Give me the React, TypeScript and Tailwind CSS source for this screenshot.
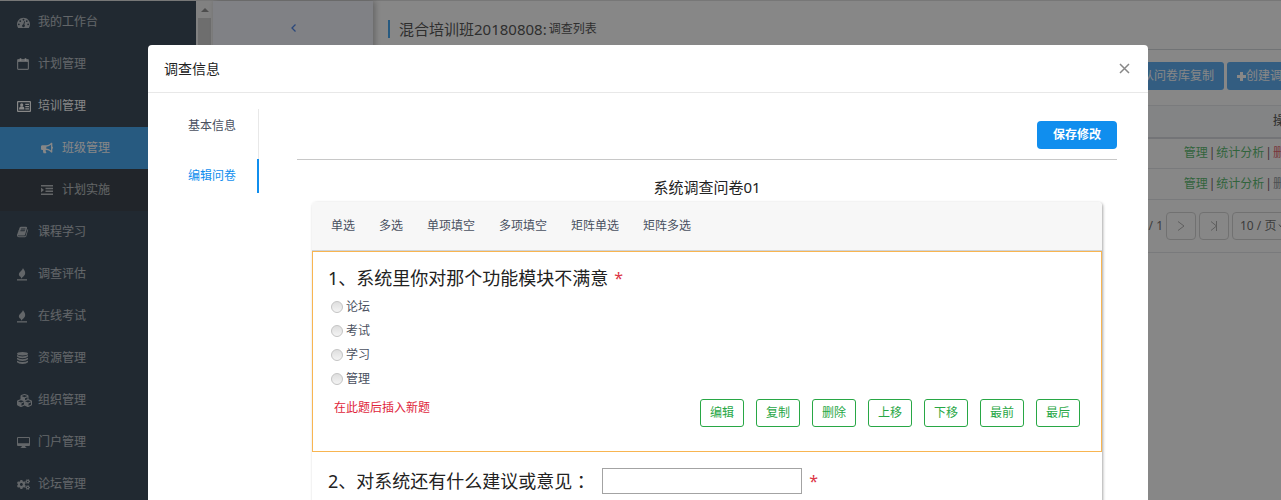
import type { ReactNode } from 'react';
import { FaBullhorn, FaCogs, FaCubes } from 'react-icons/fa';

function DashboardIcon() {
  return (
    <svg viewBox="0 0 1792 1792" width="13" height="13" fill="currentColor" aria-hidden="true">
      <path d="M384 1152q0-53-37.500-90.500t-90.500-37.500-90.500 37.500-37.500 90.500 37.500 90.500 90.500 37.500 90.500-37.500 37.500-90.500zm192-448q0-53-37.500-90.500t-90.500-37.500-90.500 37.500-37.500 90.500 37.500 90.500 90.500 37.500 90.500-37.500 37.500-90.500zm428 481l101-382q6-26-7.500-48.500t-38.500-29.500-48 6.500-30 39.500l-101 382q-60 5-107 43.500t-63 98.500q-20 77 20 146t117 89 146-20 89-117q16-60-6-117t-72-91zm660-33q0-53-37.500-90.500t-90.500-37.500-90.500 37.500-37.500 90.500 37.500 90.500 90.500 37.500 90.500-37.500 37.500-90.500zm-640-640q0-53-37.500-90.500t-90.500-37.500-90.500 37.500-37.500 90.500 37.500 90.500 90.500 37.500 90.500-37.500 37.500-90.500zm448 192q0-53-37.500-90.500t-90.500-37.500-90.500 37.500-37.500 90.500 37.500 90.500 90.500 37.500 90.500-37.500 37.500-90.500zm320 448q0 261-141 483-19 29-54 29h-1402q-35 0-54-29-141-221-141-483 0-182 71-348t191-286 286-191 348-71 348 71 286 191 191 286 71 348z" />
    </svg>
  );
}

function CalendarIcon() {
  return (
    <svg viewBox="0 0 12 12" width="12" height="12" fill="none" stroke="currentColor" aria-hidden="true">
      <rect x=".6" y="1.600" width="10.800" height="9.800" rx=".8" strokeWidth="1.200" />
      <path d="M1 3h10" strokeWidth="2" />
      <path d="M3.500 0v3M8.500 0v3" strokeWidth="1.600" />
    </svg>
  );
}

function IdCardIcon() {
  return (
    <svg viewBox="0 0 14 11" width="14" height="11" fill="currentColor" aria-hidden="true">
      <path d="M1 0h12a1 1 0 011 1v9a1 1 0 01-1 1H1a1 1 0 01-1-1V1a1 1 0 011-1zm.2 1.200v8.600h11.600V1.200z" fillRule="evenodd" />
      <circle cx="4.700" cy="3.900" r="1.600" />
      <path d="M2 8.500c0-2 .9-3.200 2.700-3.200s2.700 1.200 2.700 3.200z" />
      <path d="M8.300 2.800h3.700v1.200H8.300zM8.300 5h3.700v1.200H8.300zM8.300 7.200h3.700v1.200H8.300z" />
    </svg>
  );
}

function IndentIcon() {
  return (
    <svg viewBox="0 0 12 10" width="12" height="10" fill="currentColor" aria-hidden="true">
      <path d="M0 0h12v1.500H0zM4.500 2.800H12v1.500H4.500zM4.500 5.600H12v1.500H4.500zM0 8.500h12V10H0zM0 2.600l3 2.400-3 2.400z" />
    </svg>
  );
}

function BookIcon() {
  return (
    <svg viewBox="0 0 1792 1792" width="12" height="12" fill="currentColor" aria-hidden="true">
      <path d="M1639 478q40 57 18 129l-275 906q-19 64-76.500 107.500t-122.500 43.500h-923q-77 0-148.500-53.500t-99.500-131.500q-24-67-2-127 0-4 3-27t4-37q1-8-3-21.500t-3-19.500q2-11 8-21t16.500-23.500 16.500-23.500q23-38 45-91.500t30-91.500q3-10 .5-30t-.5-28q3-11 17-28t17-23q21-36 42-92t25-90q1-9-2.500-32t.5-28q4-13 22-30.500t22-22.500q19-26 42.500-84.500t27.500-96.500q1-8-3-25.500t-2-26.500q2-8 9-18t18-23 17-21q8-12 16.500-30.500t15-35 16-36 19.500-32 26.500-23.500 36-11.500 47.500 5.500l-1 3q38-9 51-9h761q74 0 114 56t18 130l-274 906q-36 119-71.500 153.500t-128.500 34.500h-869q-27 0-38 15-11 16-1 43 24 70 144 70h923q29 0 56-15.500t35-41.500l300-987q7-22 5-57 38 15 59 43zm-1064 2q-4 13 2 22.500t20 9.500h608q13 0 25.500-9.500t16.500-22.500l21-64q4-13-2-22.500t-20-9.500h-608q-13 0-25.500 9.500t-16.500 22.500zm-83 256q-4 13 2 22.500t20 9.500h608q13 0 25.500-9.500t16.500-22.500l21-64q4-13-2-22.500t-20-9.500h-608q-13 0-25.500 9.500t-16.500 22.500z" />
    </svg>
  );
}

function QuillIcon() {
  return (
    <svg viewBox="0 0 10 13" width="10" height="13" fill="currentColor" aria-hidden="true">
      <path d="M6 0C6.200 1.300 8.300 2.600 8.200 5c-.1 2.200-1.500 3.200-2.700 4.200L4 10.800 3.900 9C2 8.200 1.400 6.600 2.200 5 3 3.500 5.600 2.400 6 0z" />
      <path d="M0 11.200h10v1.300H0z" />
    </svg>
  );
}

function DatabaseIcon() {
  return (
    <svg viewBox="0 0 11 12" width="11" height="12" fill="currentColor" aria-hidden="true">
      <ellipse cx="5.500" cy="1.700" rx="5.500" ry="1.700" />
      <path d="M0 3q2 1.400 5.500 1.400T11 3v1.500Q9.500 6.200 5.500 6.200T0 4.500z" />
      <path d="M0 5.800q2 1.400 5.500 1.400T11 5.800v1.500Q9.500 9 5.500 9T0 7.300z" />
      <path d="M0 8.700q2 1.400 5.500 1.400T11 8.700v1.500Q9.500 12 5.500 12T0 10.200z" />
    </svg>
  );
}

function DesktopIcon() {
  return (
    <svg viewBox="0 0 13 11" width="13" height="11" fill="currentColor" aria-hidden="true">
      <path d="M1 0h11a1 1 0 011 1v7a1 1 0 01-1 1H8.200l.3 1.200h.8V11H3.700v-.8h.8L4.800 9H1a1 1 0 01-1-1V1a1 1 0 011-1zm0 1v5.200h11V1z" fillRule="evenodd" />
    </svg>
  );
}

type Entry = { label: string; icon: ReactNode; kind?: 'open' | 'sub' | 'active' };

const menu: Entry[] = [
  { label: '我的工作台', icon: <DashboardIcon /> },
  { label: '计划管理', icon: <CalendarIcon /> },
  { label: '培训管理', icon: <IdCardIcon />, kind: 'open' },
  { label: '班级管理', icon: <FaBullhorn size={12} />, kind: 'active' },
  { label: '计划实施', icon: <IndentIcon />, kind: 'sub' },
  { label: '课程学习', icon: <BookIcon /> },
  { label: '调查评估', icon: <QuillIcon /> },
  { label: '在线考试', icon: <QuillIcon /> },
  { label: '资源管理', icon: <DatabaseIcon /> },
  { label: '组织管理', icon: <FaCubes size={15} /> },
  { label: '门户管理', icon: <DesktopIcon /> },
  { label: '论坛管理', icon: <FaCogs size={13} /> },
];

const rowTone = {
  top: 'pl-[17px] text-white/65',
  open: 'pl-[17px] text-white',
  sub: 'pl-[41px] text-white/65 bg-[#000c17]',
  active: 'pl-[41px] text-white bg-[#108eee]',
};

function Sidebar() {
  return (
    <nav className="w-[196px] shrink-0 overflow-hidden bg-[#001529]">
      <ul>
        {menu.map((m) => (
          <li key={m.label}>
            <a href="#" className={`flex h-[42px] items-center ${rowTone[m.kind ?? 'top']}`}>
              <span className="flex w-[21px] shrink-0 items-center">{m.icon}</span>
              {m.label}
            </a>
          </li>
        ))}
      </ul>
    </nav>
  );
}

function ScrollTrack() {
  return (
    <div className="flex w-[17px] shrink-0 flex-col items-center bg-[#f1f1f1]">
      <div className="flex h-[17px] items-center">
        <svg viewBox="0 0 8 4" width="8" height="4" fill="#707070" aria-hidden="true">
          <path d="M4 0l4 4H0z" />
        </svg>
      </div>
      <div className="h-[300px] w-[13px] bg-[#c1c1c1]" />
    </div>
  );
}

function RowActions({ muted }: { muted?: boolean }) {
  return (
    <div className="flex justify-end gap-px whitespace-nowrap text-[#4a2030]">
      <a href="#" className="text-[#28a745]">管理</a>
      <span>|</span>
      <a href="#" className="text-[#28a745]">统计分析</a>
      <span>|</span>
      <a href="#" className={muted ? 'text-[#6c757d]' : 'text-[#dc3545]'}>删除</a>
    </div>
  );
}

const pagerButton = 'flex h-7 w-[30px] items-center justify-center rounded border border-[#c8c8c8] text-[#999]';

function SurveyList() {
  return (
    <main className="min-w-0 flex-1 overflow-hidden pl-[15px]">
      <div className="-mr-[23px]">
        <header className="flex h-[49px] items-center border-b border-[#c9ccd2] pb-[3px] pt-[10px]">
          <h1 className="flex h-[18px] items-center gap-[2px] border-l-2 border-[#108eee] pl-[9px] text-[15px] text-[#222]">
            混合培训班20180808:
            <small className="text-xs">调查列表</small>
          </h1>
        </header>
        <div className="flex justify-end gap-[3px] pt-3 text-white">
          <button type="button" className="h-7 rounded-[3px] bg-[#2d96f0] px-[10px]">从问卷库复制</button>
          <button type="button" className="flex h-7 items-center rounded-[3px] bg-[#2d96f0] px-[10px]">
            <svg viewBox="0 0 9 9" width="9" height="9" fill="currentColor" aria-hidden="true">
              <path d="M3 0h3v3h3v3H6v3H3V6H0V3h3z" />
            </svg>
            创建调查
          </button>
        </div>
        <table className="mt-[15px] w-full border-collapse">
          <thead>
            <tr className="h-8 border-t border-b-2 border-t-[#dee2e6] border-b-[#cdd0d6] bg-[#f6f8fb]">
              <th className="pr-[7px] text-right font-medium text-[#333]">操作</th>
            </tr>
          </thead>
          <tbody>
            <tr className="h-[31px] border-b border-[#dcdfe3]">
              <td className="pr-[7px]"><RowActions /></td>
            </tr>
            <tr className="h-[31px] border-b border-[#dcdfe3]">
              <td className="pr-[7px]"><RowActions muted /></td>
            </tr>
          </tbody>
        </table>
        <div className="flex h-[53px] items-center justify-end gap-[3px] border-b border-[#dcdfe3] text-[#444]">
          <span className="text-xs">/ 1</span>
          <button type="button" aria-label="下一页" className={pagerButton}>
            <svg viewBox="0 0 8 10" width="8" height="10" fill="none" stroke="currentColor" aria-hidden="true">
              <path d="M1 .5L7 5 1 9.500" />
            </svg>
          </button>
          <button type="button" aria-label="末页" className={pagerButton}>
            <svg viewBox="0 0 8 10" width="8" height="10" fill="none" stroke="currentColor" aria-hidden="true">
              <path d="M1 .5L6.500 5 1 9.500M6.500 0v10" />
            </svg>
          </button>
          <div className="flex h-7 w-[72px] items-center gap-px rounded border border-[#c8c8c8] pl-[7px]">
            <select aria-label="每页条数" className="appearance-none text-xs">
              <option>10 / 页</option>
            </select>
            <svg viewBox="0 0 8 5" width="8" height="5" fill="none" stroke="currentColor" aria-hidden="true">
              <path d="M1 .5L4 4l3-3.500" />
            </svg>
          </div>
        </div>
      </div>
    </main>
  );
}

const questionTypes = ['单选', '多选', '单项填空', '多项填空', '矩阵单选', '矩阵多选'];
const options = ['论坛', '考试', '学习', '管理'];
const questionActions = ['编辑', '复制', '删除', '上移', '下移', '最前', '最后'];

function ChoiceQuestion() {
  return (
    <fieldset className="border border-[#f8b551] px-[15px] pb-6 pt-3">
      <legend className="float-left flex h-[27px] w-full items-center gap-[6px] text-lg text-[#222]">
        1、系统里你对那个功能模块不满意
        <span className="text-base text-[#dc3545]">*</span>
      </legend>
      <ul className="clear-both pl-[3px] pt-1">
        {options.map((o) => (
          <li key={o}>
            <label className="flex h-6 items-center gap-[3px]">
              <input
                type="radio"
                name="module"
                className="h-3 w-3 appearance-none rounded-full border border-[#c4c4c4] bg-linear-to-b from-[#dedede] to-[#f4f4f4]"
              />
              {o}
            </label>
          </li>
        ))}
      </ul>
      <div className="flex items-start justify-between px-[6px] pt-2">
        <a href="#" className="leading-[18px] text-[#e0263c]">在此题后插入新题</a>
        <div className="flex gap-3">
          {questionActions.map((a) => (
            <button key={a} type="button" className="h-7 w-11 rounded-[3px] border border-[#28a745] text-[#28a745]">
              {a}
            </button>
          ))}
        </div>
      </div>
    </fieldset>
  );
}

function SurveyModal() {
  return (
    <div className="fixed inset-0 flex items-start justify-center overflow-hidden bg-[#373737]/60 pl-[15px] pt-[45px]">
      <section role="dialog" aria-label="调查信息" className="w-[1000px] shrink-0 rounded bg-white pb-8">
        <header className="flex h-12 items-center justify-between border-b border-[#e8e8e8] pl-4 pr-[18px]">
          <h2 className="text-sm text-[#222]">调查信息</h2>
          <button type="button" aria-label="关闭" className="text-[#888]">
            <svg viewBox="0 0 11 11" width="11" height="11" fill="none" stroke="currentColor" strokeWidth="1.500" aria-hidden="true">
              <path d="M1 1l9 9M10 1l-9 9" />
            </svg>
          </button>
        </header>
        <div className="flex items-start pl-4 pr-[31px] pt-4">
          <div role="tablist" className="mr-[38px] flex w-[95px] shrink-0 flex-col">
            <button type="button" role="tab" className="h-[50px] border-r border-[#e8e8e8] pb-4 pl-6 text-left">基本信息</button>
            <button type="button" role="tab" aria-selected="true" className="h-[34px] border-r-2 border-[#108eee] pl-6 text-left text-[#108eee]">编辑问卷</button>
          </div>
          <div className="min-w-0 flex-1">
            <div className="flex justify-end border-b border-[#c8c8c8] pb-[10px] pt-3">
              <button type="button" className="h-7 w-20 rounded bg-[#108eee] font-bold text-white">保存修改</button>
            </div>
            <h3 className="pb-1 pt-[17px] text-center text-[15px] leading-[21px] text-[#222]">系统调查问卷01</h3>
            <div className="mx-[15px] rounded shadow-[1px_1px_3px_rgba(0,0,0,0.35)]">
              <div className="flex h-[49px] items-center gap-6 rounded-t border-b border-[#d0d4d8] bg-[#f7f7f7] pl-[19px]">
                {questionTypes.map((t) => (
                  <button key={t} type="button">{t}</button>
                ))}
              </div>
              <ChoiceQuestion />
              <div className="flex h-[58px] items-center px-4">
                <label htmlFor="advice" className="flex text-lg text-[#222]">
                  2、对系统还有什么建议或意见
                  <span className="font-['Noto_Sans_CJK_TC']">：</span>
                </label>
                <input id="advice" className="ml-3 h-[26px] w-[200px] border border-[#a3a3a3] px-1" />
                <span className="ml-[7px] text-base text-[#dc3545]">*</span>
              </div>
            </div>
          </div>
        </div>
      </section>
    </div>
  );
}

export default function App() {
  return (
    <div className="h-screen overflow-hidden font-['Noto_Sans','Noto_Sans_CJK_SC',sans-serif] text-xs text-[#495060]">
      <div className="flex h-full border-t border-[#d8d8d8] bg-white">
        <Sidebar />
        <ScrollTrack />
        <aside className="z-0 flex w-40 shrink-0 justify-center bg-[#eef0fb] pt-[23px] shadow-[2px_0_6px_rgba(0,0,0,0.35)]">
          <button type="button" aria-label="收起" className="h-2 text-[#1a62e0]">
            <svg viewBox="0 0 5 8" width="5" height="8" fill="none" stroke="currentColor" strokeWidth="1.300" aria-hidden="true">
              <path d="M4.500 .5L1 4l3.500 3.500" />
            </svg>
          </button>
        </aside>
        <SurveyList />
      </div>
      <SurveyModal />
    </div>
  );
}
